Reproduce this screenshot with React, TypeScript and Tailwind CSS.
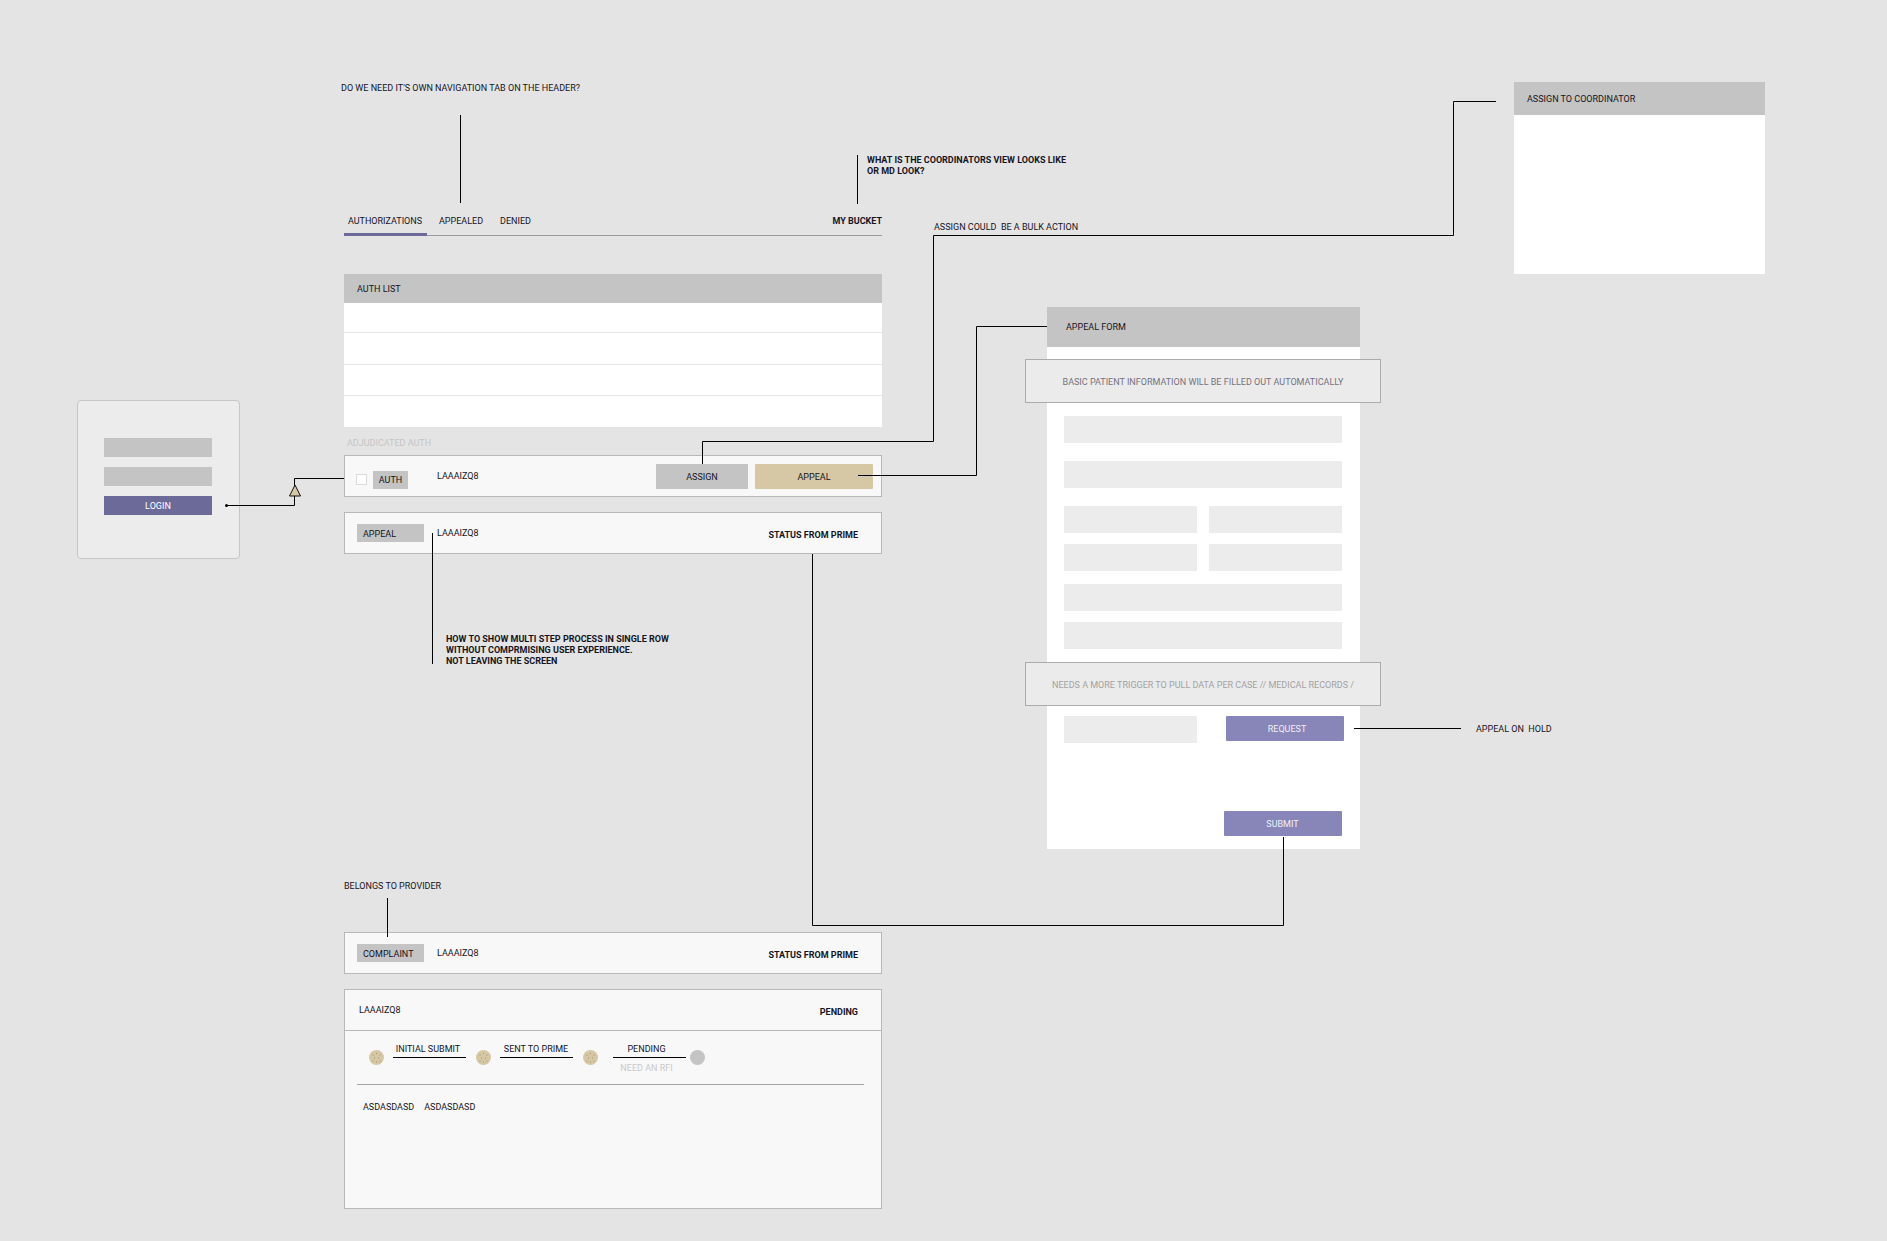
// App.tsx
const wires = [
  'M460.5 115V203',
  'M857.5 155V204',
  'M702.5 464V441.5H933.5V235.5H1453.5V101.5H1496',
  'M858 475.5H976.5V326.5H1047',
  'M1354 728.5H1461',
  'M1283.5 837V925.5H812.5V554',
  'M432.5 533V664',
  'M387.5 898V937',
  'M227 505.5H294.5V478.5H344',
];

function Dot({ on = true }: { on?: boolean }) {
  return (
    <svg width="15" height="15" viewBox="0 0 15 15" className="shrink-0">
      <circle cx="7.5" cy="7.5" r="7.5" fill={on ? '#d6c8a4' : '#c4c4c4'} />
      {on && (
        <g fill="#8a8268">
          <circle cx="4" cy="5" r="0.5" />
          <circle cx="7.5" cy="3.5" r="0.5" />
          <circle cx="11" cy="5" r="0.5" />
          <circle cx="5.5" cy="8" r="0.5" />
          <circle cx="9.5" cy="8" r="0.5" />
          <circle cx="4" cy="11" r="0.5" />
          <circle cx="7.5" cy="12" r="0.5" />
          <circle cx="11" cy="11" r="0.5" />
        </g>
      )}
    </svg>
  );
}

function Step({ label, sub, width, labelClass }: { label: string; sub?: string; width: string; labelClass: string }) {
  return (
    <div className={`relative flex h-[15px] shrink-0 items-center ${width}`}>
      <span className={`absolute -top-[7px] left-0 right-0 text-center ${labelClass}`}>{label}</span>
      <div className="h-px w-full bg-black" />
      {sub && <span className={`absolute top-[12px] left-0 right-0 text-center text-[#c9c9c9] ${labelClass}`}>{sub}</span>}
    </div>
  );
}

function Field({ className = '' }: { className?: string }) {
  return <div className={`h-[27px] bg-[#ececec] ${className}`} />;
}

export default function App() {
  return (
    <div className="relative h-[1241px] w-[1887px] overflow-hidden bg-[#e4e4e4] font-['Roboto',sans-serif] text-[9px] leading-[13px] text-[#14141f]">
      {/* Login */}
      <div className="absolute left-[77px] top-[400px] flex h-[159px] w-[163px] flex-col gap-[10px] rounded-[4px] border border-[#c6c6c6] bg-[#ececec] pl-[26px] pr-[27px] pt-[37px]">
        <div className="h-[19px] bg-[#c4c4c4]" />
        <div className="h-[19px] bg-[#c4c4c4]" />
        <div className="flex h-[19px] items-center justify-center bg-[#6c6a99] pt-px text-white">LOGIN</div>
      </div>

      {/* Notes */}
      <p className="absolute left-[341px] top-[82px]">DO WE NEED IT'S OWN NAVIGATION TAB ON THE HEADER?</p>
      <p className="absolute left-[867px] top-[155px] w-[230px] font-bold leading-[11px]">
        WHAT IS THE COORDINATORS VIEW LOOKS LIKE
        <br />
        OR MD LOOK?
      </p>
      <p className="absolute left-[934px] top-[221px]">ASSIGN COULD&nbsp; BE A BULK ACTION</p>
      <p className="absolute left-[446px] top-[634px] font-bold leading-[11px]">
        HOW TO SHOW MULTI STEP PROCESS IN SINGLE ROW
        <br />
        WITHOUT COMPRMISING USER EXPERIENCE.
        <br />
        NOT LEAVING THE SCREEN
      </p>
      <p className="absolute left-[344px] top-[880px]">BELONGS TO PROVIDER</p>
      <p className="absolute left-[1476px] top-[723px]">APPEAL ON&nbsp; HOLD</p>

      {/* Authorizations column */}
      <div className="absolute left-[344px] top-[207px] flex w-[538px] flex-col">
        <div className="flex h-[29px] items-stretch border-b border-[#9a9a9a]">
          <div className="-mb-px flex w-[83px] items-center justify-center border-b-[3px] border-[#6c6a99] pr-px pt-[2px]">AUTHORIZATIONS</div>
          <div className="ml-[12px] flex items-center">APPEALED</div>
          <div className="ml-[17px] flex items-center">DENIED</div>
          <div className="ml-auto flex items-center font-bold">MY BUCKET</div>
        </div>

        <div className="mt-[38px] flex h-[29px] items-center bg-[#c4c4c4] px-[13px] pt-px">AUTH LIST</div>
        <div className="flex h-[124px] flex-col divide-y divide-[#e6e6e6] bg-white">
          <div className="h-[30px]" />
          <div className="h-[32px]" />
          <div className="h-[31px]" />
          <div className="flex-1" />
        </div>

        <p className="mt-[10px] pl-[3px] text-[#c4c4c4]">ADJUDICATED AUTH</p>

        <div className="mt-[5px] flex h-[42px] items-center border border-[#b8b8b8] bg-[#f8f8f8] pl-[11px] pr-[8px]">
          <div className="mt-[7px] h-[11px] w-[11px] border border-[#dcdcdc] bg-white" />
          <div className="ml-[6px] mt-[7px] flex h-[18px] w-[35px] items-center justify-center bg-[#c4c4c4] pt-px">AUTH</div>
          <span className="ml-[29px]">LAAAIZQ8</span>
          <div className="ml-auto flex h-[25px] w-[92px] items-center justify-center bg-[#c4c4c4] pt-[2px]">ASSIGN</div>
          <div className="ml-[7px] flex h-[25px] w-[118px] items-center justify-center rounded-[1px] bg-[#d6c8a4] pt-[2px]">APPEAL</div>
        </div>

        <div className="mt-[15px] flex h-[42px] items-center border border-[#b8b8b8] bg-[#f8f8f8] pl-[12px] pr-[23px]">
          <div className="flex h-[18px] w-[67px] items-center bg-[#c4c4c4] pl-[6px] pt-[3px]">APPEAL</div>
          <span className="ml-[13px] pt-px">LAAAIZQ8</span>
          <span className="ml-auto pt-[5px] font-bold">STATUS FROM PRIME</span>
        </div>
      </div>

      {/* Provider column */}
      <div className="absolute left-[344px] top-[932px] flex w-[538px] flex-col gap-[15px]">
        <div className="flex h-[42px] items-center border border-[#b8b8b8] bg-[#f8f8f8] pl-[12px] pr-[23px]">
          <div className="flex h-[18px] w-[67px] items-center bg-[#c4c4c4] pl-[6px] pt-[3px]">COMPLAINT</div>
          <span className="ml-[13px] pt-px">LAAAIZQ8</span>
          <span className="ml-auto pt-[5px] font-bold">STATUS FROM PRIME</span>
        </div>

        <div className="flex h-[220px] flex-col border border-[#b8b8b8] bg-[#f8f8f8]">
          <div className="flex h-[41px] shrink-0 items-center justify-between border-b border-[#b8b8b8] pl-[14px] pr-[23px]">
            <span className="pt-px">LAAAIZQ8</span>
            <span className="pt-[4px] font-bold">PENDING</span>
          </div>
          <div className="ml-[12px] mr-[17px] flex h-[54px] items-start border-b border-[#a5a5a5] pl-[12px] pt-[19px]">
            <Dot />
            <div className="ml-[9px]" />
            <Step label="INITIAL SUBMIT" width="w-[73px]" labelClass="pr-[3px]" />
            <div className="ml-[10px]" />
            <Dot />
            <div className="ml-[9px]" />
            <Step label="SENT TO PRIME" width="w-[73px]" labelClass="pr-px" />
            <div className="ml-[10px]" />
            <Dot />
            <div className="ml-[15px]" />
            <Step label="PENDING" sub="NEED AN RFI" width="w-[73px]" labelClass="pr-[6px]" />
            <div className="ml-[4px]" />
            <Dot on={false} />
          </div>
          <div className="flex gap-[10px] pl-[18px] pt-[16px]">
            <span>ASDASDASD</span>
            <span>ASDASDASD</span>
          </div>
        </div>
      </div>

      {/* Appeal form */}
      <div className="absolute left-[1047px] top-[307px] flex h-[542px] w-[313px] flex-col bg-white">
        <div className="flex h-[40px] shrink-0 items-center bg-[#c4c4c4] pl-[19px]">APPEAL FORM</div>
        <div className="-ml-[22px] -mr-[21px] mt-[12px] flex h-[44px] shrink-0 items-center justify-center border border-[#ababab] bg-[#ebebeb] pt-[2px] text-[#73737f]">
          BASIC PATIENT INFORMATION WILL BE FILLED OUT AUTOMATICALLY
        </div>
        <div className="ml-[17px] mr-[18px] mt-[13px] flex flex-col">
          <Field />
          <Field className="mt-[18px]" />
          <div className="mt-[18px] grid grid-cols-2 gap-x-[12px] gap-y-[11px]">
            <Field />
            <Field />
            <Field />
            <Field />
          </div>
          <Field className="mt-[13px]" />
          <Field className="mt-[11px]" />
        </div>
        <div className="-ml-[22px] -mr-[21px] mt-[13px] flex h-[44px] shrink-0 items-center justify-center border border-[#ababab] bg-[#ebebeb] pt-[2px] text-[#a2a2a2]">
          NEEDS A MORE TRIGGER TO PULL DATA PER CASE // MEDICAL RECORDS /
        </div>
        <div className="ml-[17px] mr-[16px] mt-[10px] flex items-start justify-between">
          <Field className="w-[133px]" />
          <div className="flex h-[25px] w-[118px] items-center justify-center rounded-[1px] bg-[#8885b9] pl-[4px] pt-px text-[#f0f0f6]">REQUEST</div>
        </div>
        <div className="ml-auto mr-[18px] mt-[68px] flex h-[25px] w-[118px] items-center justify-center rounded-[1px] bg-[#8885b9] pr-px pt-[2px] text-[#f0f0f6]">
          SUBMIT
        </div>
      </div>

      {/* Assign panel */}
      <div className="absolute left-[1514px] top-[82px] flex h-[192px] w-[251px] flex-col bg-white">
        <div className="flex h-[33px] items-center bg-[#c4c4c4] pl-[13px] pt-[2px]">ASSIGN TO COORDINATOR</div>
      </div>

      {/* Connectors */}
      <svg className="pointer-events-none absolute left-0 top-0" width="1887" height="1241" fill="none">
        {wires.map((d) => (
          <path key={d} d={d} stroke="#000" strokeWidth="1" />
        ))}
        <circle cx="226.5" cy="505.5" r="1.5" fill="#000" />
        <path d="M295 485L289.5 496H300.5Z" fill="#d6c8a4" stroke="#111" strokeWidth="1" />
      </svg>
    </div>
  );
}
